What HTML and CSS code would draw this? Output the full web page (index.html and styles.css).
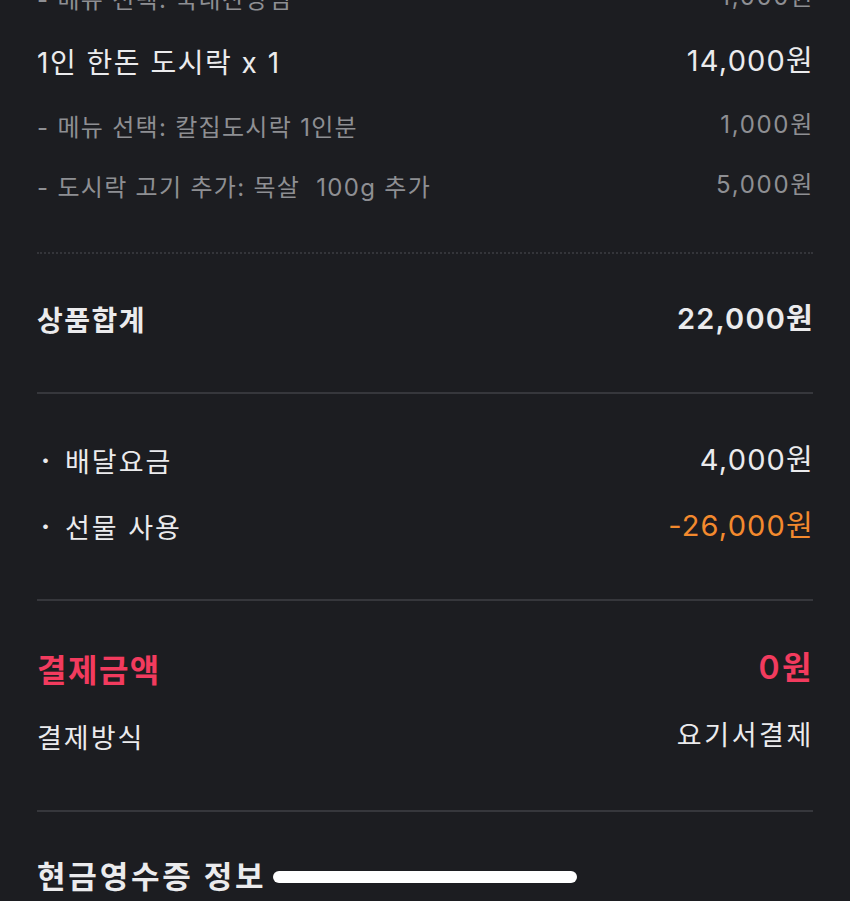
FILE: index.html
```html
<!DOCTYPE html>
<html lang="ko">
<head>
<meta charset="utf-8">
<link rel="stylesheet" href="styles.css">
</head>
<body>
<main class="receipt">
  <section class="items">
    <div class="row sub cut"><span>- 메뉴 선택: 국내산양념</span><span class="val">1,000원</span></div>
    <div class="row item"><span>1인 한돈 도시락 x 1</span><span class="val">14,000원</span></div>
    <div class="row sub"><span>- 메뉴 선택: 칼집도시락 1인분</span><span class="val">1,000원</span></div>
    <div class="row sub"><span>- 도시락 고기 추가: 목살&nbsp; 100g 추가</span><span class="val">5,000원</span></div>
  </section>
  <hr class="dotted">
  <section class="total">
    <div class="row strong"><span>상품합계</span><span class="val">22,000원</span></div>
  </section>
  <hr class="solid">
  <section class="fees">
    <div class="row fee"><span class="bullet">·</span><span class="grow">배달요금</span><span class="val">4,000원</span></div>
    <div class="row fee"><span class="bullet">·</span><span class="grow">선물 사용</span><span class="val orange">-26,000원</span></div>
  </section>
  <hr class="solid">
  <section class="pay">
    <div class="row pay-amount"><span>결제금액</span><span class="val">0원</span></div>
    <div class="row pay-method"><span>결제방식</span><span class="val">요기서결제</span></div>
  </section>
  <hr class="solid">
  <section class="receipt-info">
    <h2 class="heading">현금영수증 정보</h2>
  </section>
</main>
<div class="home-indicator"></div>
</body>
</html>
```

FILE: styles.css
```css
html, body {
  margin: 0;
  padding: 0;
  background: #1c1d21;
  height: 100%;
  overflow: hidden;
}
body {
  font-family: Inter, "Noto Sans CJK KR", "Noto Sans", sans-serif;
  color: #ebebed;
  position: relative;
}
.receipt {
  padding: 0 37px;
}
.row {
  display: flex;
  align-items: center;
  justify-content: space-between;
  white-space: nowrap;
}
.val {
  margin-left: auto;
  position: relative;
  top: -3px;
  margin-right: -1px;
}
.items {
  margin-top: -33px;
}
.cut {
  height: 65px;
}
.item {
  height: 68px;
  font-size: 28px;
  letter-spacing: 1.5px;
}
.item .val {
  font-size: 29px;
  letter-spacing: 1.2px;
}
.sub {
  height: 60px;
  font-size: 24px;
  letter-spacing: 1.3px;
  color: #8e8f93;
}
.sub .val {
  letter-spacing: 1.7px;
}
hr {
  margin: 0;
  border: 0;
}
.dotted {
  border-top: 2px dotted #34353a;
  margin-top: 37px;
}
.solid {
  height: 2px;
  background: #36373c;
}
.total {
  padding: 35px 0 43px;
}
.strong {
  height: 60px;
  font-size: 28px;
  font-weight: 700;
  letter-spacing: 1.5px;
}
.strong .val {
  font-size: 29px;
  font-weight: 600;
  letter-spacing: 1.2px;
}
.fees {
  padding: 33px 0 40px;
}
.fee {
  height: 66px;
  font-size: 27px;
  letter-spacing: 2px;
}
.fee .val {
  font-size: 29px;
  letter-spacing: 1.2px;
}
.bullet {
  width: 28px;
  padding-left: 4px;
  box-sizing: border-box;
  font-weight: 700;
}
.grow {
  flex: 1;
}
.orange {
  color: #f38a2e;
}
.pay {
  padding: 33px 0 40px;
}
.pay-amount {
  height: 68px;
  font-size: 32px;
  font-weight: 700;
  letter-spacing: 1.5px;
  color: #f23b5e;
}
.pay-amount .val {
  font-weight: 600;
  letter-spacing: 2.5px;
}
.pay-method {
  height: 68px;
  font-size: 27px;
  letter-spacing: 2px;
}
.pay-method .val {
  letter-spacing: 2.6px;
}
.receipt-info {
  padding-top: 35px;
}
.heading {
  margin: 0;
  height: 60px;
  line-height: 60px;
  font-size: 31px;
  font-weight: 700;
  letter-spacing: 2.8px;
  color: #ebebed;
}
.home-indicator {
  position: absolute;
  left: 273px;
  bottom: 18px;
  width: 304px;
  height: 12px;
  border-radius: 6px;
  background: #ffffff;
}
```
